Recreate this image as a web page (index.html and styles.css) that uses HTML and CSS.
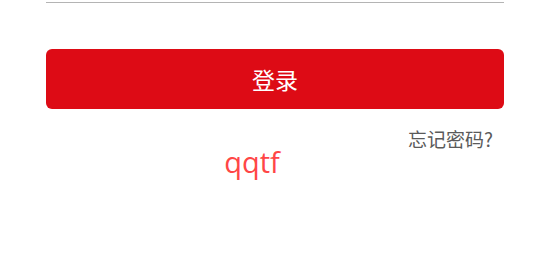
FILE: index.html
```html
<!DOCTYPE html>
<html lang="zh">
<head>
<meta charset="utf-8">
<link rel="stylesheet" href="styles.css">
</head>
<body>
<div class="form">
  <div class="divider"></div>
  <button class="login-btn">登录</button>
  <div class="links">
    <a class="forgot">忘记密码?</a>
  </div>
  <div class="brand">qqtf</div>
</div>
</body>
</html>
```
FILE: styles.css
```css
html, body {
  margin: 0;
  padding: 0;
  background: #ffffff;
}
body {
  font-family: "Noto Sans", "Noto Sans CJK SC", sans-serif;
}
.form {
  padding: 2px 46px 0;
  display: flex;
  flex-direction: column;
}
.divider {
  height: 1px;
  background: #b4b4b4;
}
.login-btn {
  margin-top: 46px;
  height: 60px;
  border: none;
  border-radius: 6px;
  background: #dd0b15;
  color: #ffffff;
  font-family: "Noto Sans CJK SC", sans-serif;
  font-size: 23px;
  padding: 0;
}
.links {
  display: flex;
  justify-content: flex-end;
  padding-right: 11px;
  margin-top: 17px;
}
.forgot {
  font-family: "Noto Sans CJK SC", sans-serif;
  font-size: 19px;
  line-height: 26px;
  color: #5a5a5a;
}
.brand {
  align-self: center;
  margin-right: 46px;
  margin-top: -8px;
  font-family: "Open Sans", sans-serif;
  font-size: 29px;
  line-height: 36px;
  color: #ff4646;
}
```
